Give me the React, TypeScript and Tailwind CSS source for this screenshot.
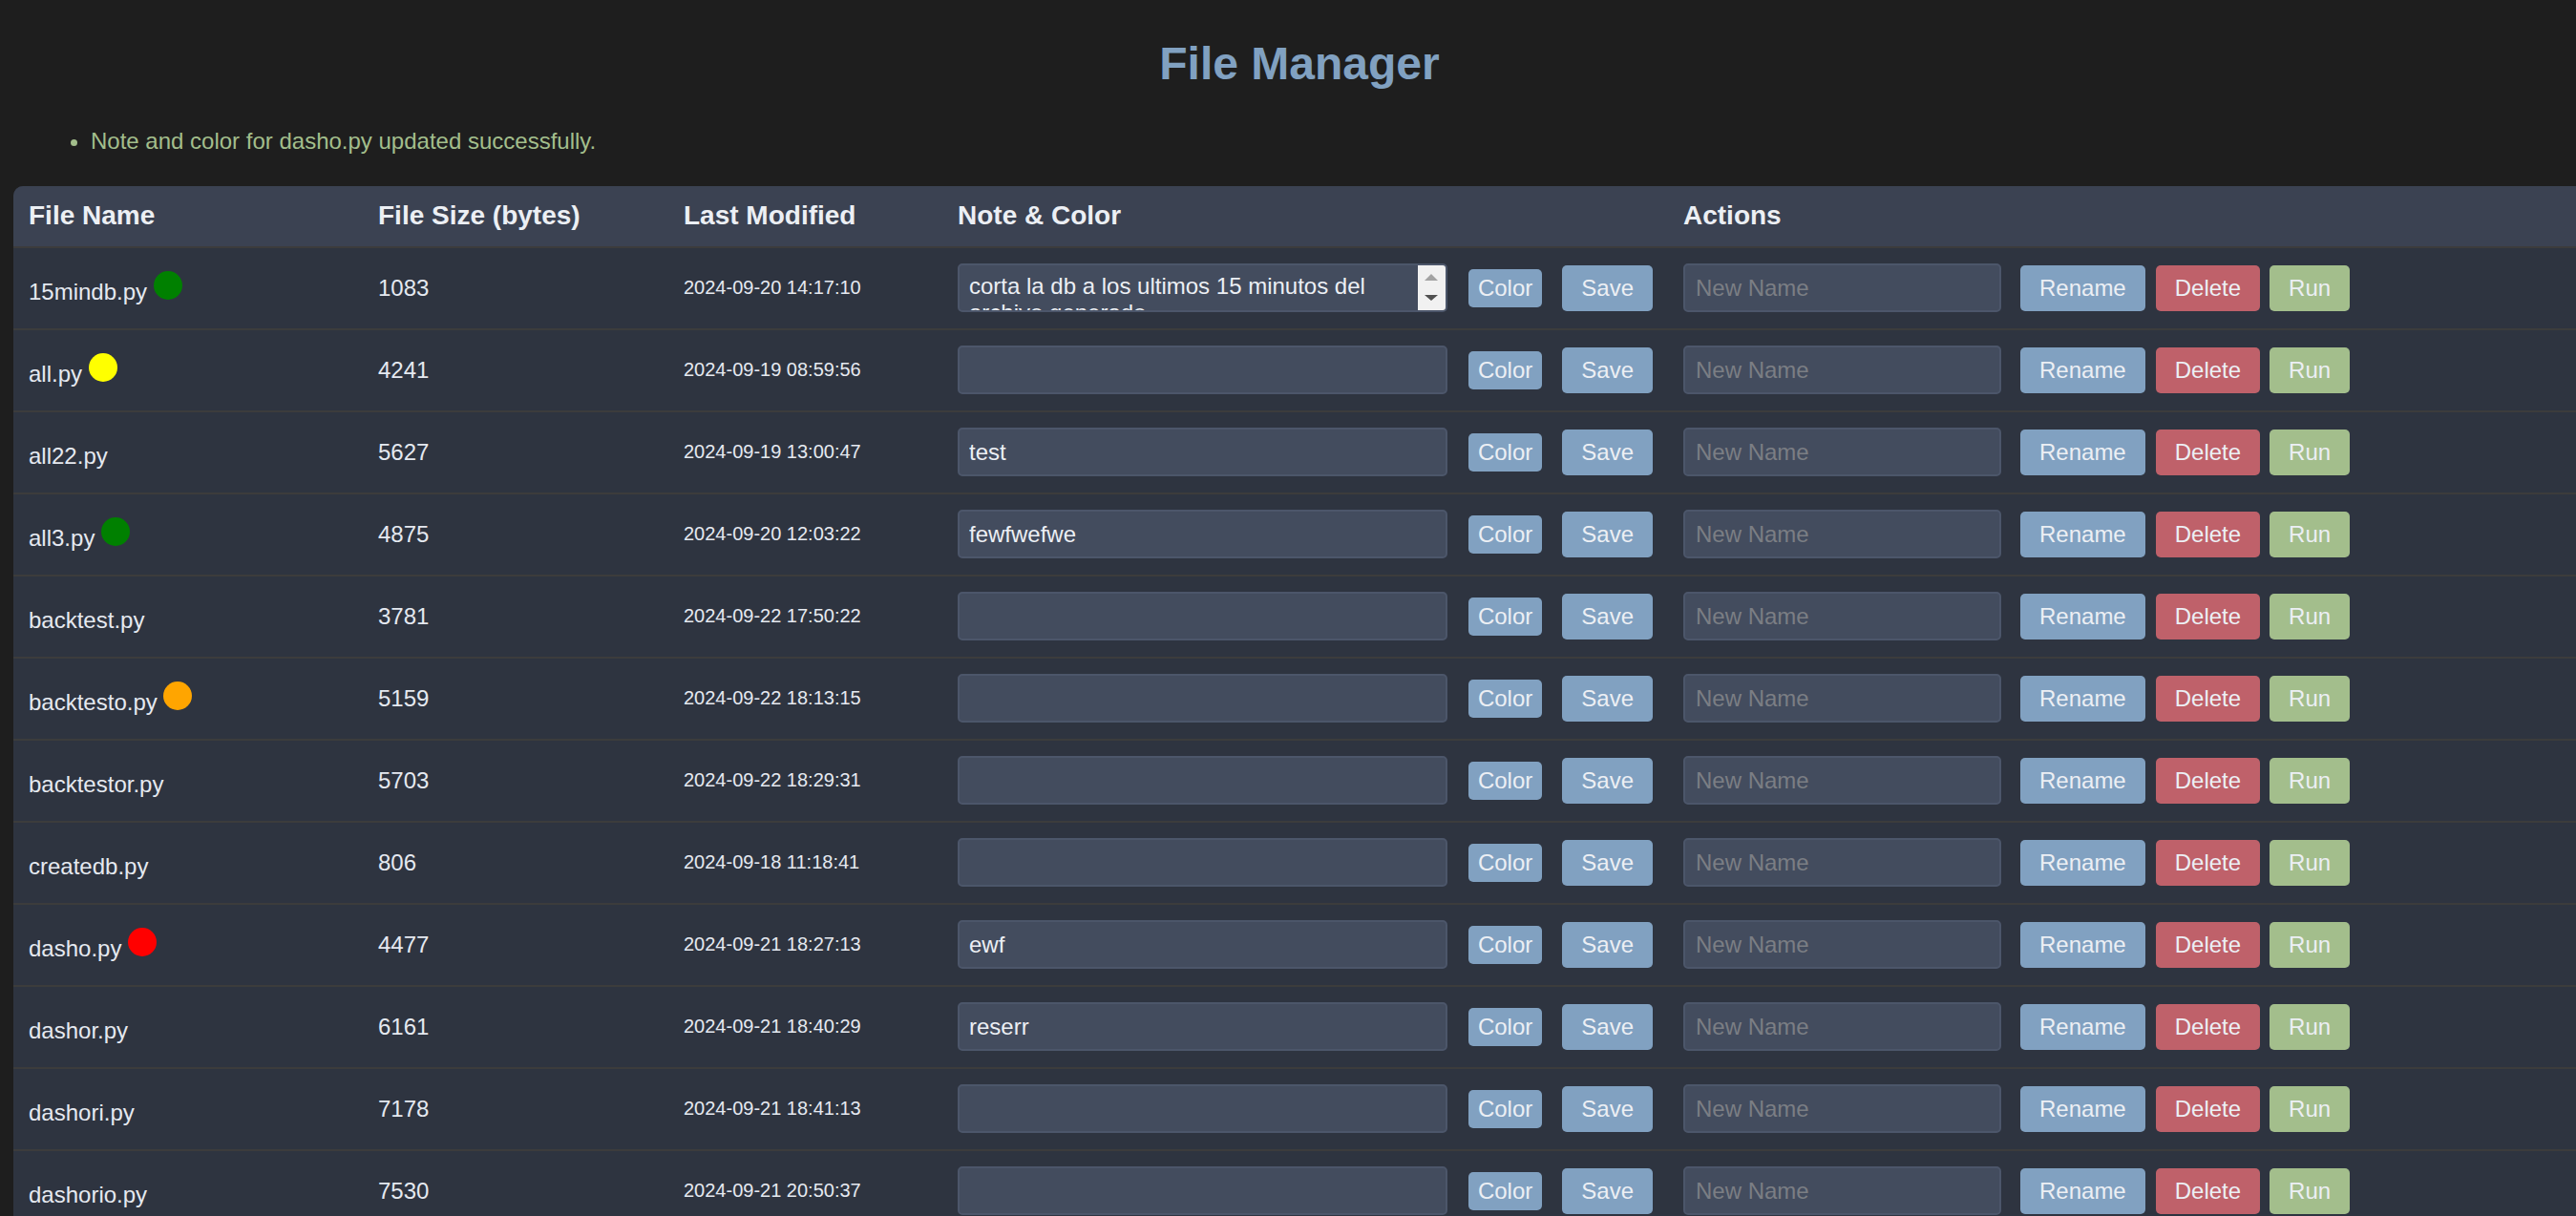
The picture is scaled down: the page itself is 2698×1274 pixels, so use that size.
import React from 'react';

type FileRow = {
  name: string;
  dot: string;
  size: string;
  modified: string;
  note: string;
};

const files: FileRow[] = [
  { name: '15mindb.py', dot: 'bg-[#008000]', size: '1083', modified: '2024-09-20 14:17:10', note: 'corta la db a los ultimos 15 minutos del archivo generado' },
  { name: 'all.py', dot: 'bg-[#ffff00]', size: '4241', modified: '2024-09-19 08:59:56', note: '' },
  { name: 'all22.py', dot: '', size: '5627', modified: '2024-09-19 13:00:47', note: 'test' },
  { name: 'all3.py', dot: 'bg-[#008000]', size: '4875', modified: '2024-09-20 12:03:22', note: 'fewfwefwe' },
  { name: 'backtest.py', dot: '', size: '3781', modified: '2024-09-22 17:50:22', note: '' },
  { name: 'backtesto.py', dot: 'bg-[#ffa500]', size: '5159', modified: '2024-09-22 18:13:15', note: '' },
  { name: 'backtestor.py', dot: '', size: '5703', modified: '2024-09-22 18:29:31', note: '' },
  { name: 'createdb.py', dot: '', size: '806', modified: '2024-09-18 11:18:41', note: '' },
  { name: 'dasho.py', dot: 'bg-[#ff0000]', size: '4477', modified: '2024-09-21 18:27:13', note: 'ewf' },
  { name: 'dashor.py', dot: '', size: '6161', modified: '2024-09-21 18:40:29', note: 'reserr' },
  { name: 'dashori.py', dot: '', size: '7178', modified: '2024-09-21 18:41:13', note: '' },
  { name: 'dashorio.py', dot: '', size: '7530', modified: '2024-09-21 20:50:37', note: '' },
];

const cols = 'grid grid-cols-[366px_320px_287px_760px_1fr]';
const btn = 'h-[48px] rounded-[5px] px-5 text-[24px] leading-[28px] text-[#eceff4]';

function NoteField({ note, long }: { note: string; long: boolean }) {
  if (long) {
    // textarea with the classic scrollbar strip on the right
    return (
      <div className="flex h-[51px] w-[514px] overflow-hidden rounded-[5px] border-2 border-[#4c566a] bg-[#434c5e]">
        <textarea
          defaultValue={note}
          className="min-w-0 flex-1 resize-none overflow-hidden bg-transparent px-[10px] pt-[8px] text-[24px] leading-[27.6px] text-[#eceff4] outline-none"
        />
        <div className="flex w-[29px] flex-col items-center justify-between bg-[#f1f1f1] pt-[9px] pb-[10px]">
          <span className="h-0 w-0 border-x-[7px] border-b-[7px] border-x-transparent border-b-[#a3a3a3]" />
          <span className="h-0 w-0 border-x-[7px] border-t-[6px] border-x-transparent border-t-[#505050]" />
        </div>
      </div>
    );
  }
  return (
    <input
      defaultValue={note}
      className="h-[51px] w-[514px] rounded-[5px] border-2 border-[#4c566a] bg-[#434c5e] px-[10px] text-[24px] text-[#eceff4] outline-none"
    />
  );
}

export default function App() {
  return (
    <div className="h-screen overflow-hidden bg-[#1e1e1e] font-['Liberation_Sans',Arial,sans-serif] text-[#eceff4]">
      <h1 className="pt-[39px] pl-[24px] text-center text-[48px] leading-[55px] font-bold text-[#81a1c1]">File Manager</h1>

      <ul className="mt-[40px] list-disc pl-[95px] text-[24px] leading-[27.6px] text-[#a3be8c] marker:text-[#a3be8c]">
        <li>Note and color for dasho.py updated successfully.</li>
      </ul>

      <div className="mt-[33px] pl-[14px]">
        <div className="w-full overflow-hidden rounded-tl-[10px] bg-[#2e3440]">
          {/* header */}
          <div className={`${cols} h-[65px] border-b-2 border-[#3c3c3c] bg-[#3b4252] text-[28px] leading-[32px] font-bold text-[#eceff4]`}>
            <div className="self-center px-4">File Name</div>
            <div className="self-center px-4">File Size (bytes)</div>
            <div className="self-center px-4">Last Modified</div>
            <div className="self-center px-4">Note &amp; Color</div>
            <div className="self-center px-4">Actions</div>
          </div>

          {files.map((f, i) => (
            <div key={f.name} className={`${cols} h-[86px] border-b-2 border-[#3c3c3c] text-[24px] leading-[27.6px] text-[#e5e9f0]`}>
              <div className="self-center px-4">
                {f.name} <span className={`inline-block h-[30px] w-[30px] rounded-full ${f.dot}`} />
              </div>
              <div className="self-center px-4">{f.size}</div>
              <div className="self-center px-4 text-[20px] leading-[23px]">{f.modified}</div>
              <div className="flex items-center px-4">
                <NoteField note={f.note} long={i === 0} />
                <button className="ml-[22px] h-[40px] rounded-[5px] bg-[#81a1c1] px-[10px] text-[24px] leading-[28px] text-[#eceff4]">Color</button>
                <button className={`ml-[21px] bg-[#81a1c1] ${btn}`}>Save</button>
              </div>
              <div className="flex items-center px-4">
                <input
                  placeholder="New Name"
                  className="h-[51px] w-[333px] rounded-[5px] border-2 border-[#4c566a] bg-[#434c5e] px-[11px] text-[24px] text-[#eceff4] outline-none placeholder:text-[#7b7e84]"
                />
                <button className={`ml-[20px] bg-[#81a1c1] ${btn}`}>Rename</button>
                <button className={`ml-[11px] bg-[#bf616a] ${btn}`}>Delete</button>
                <button className={`ml-[10px] bg-[#a3be8c] ${btn}`}>Run</button>
              </div>
            </div>
          ))}
        </div>
      </div>
    </div>
  );
}
